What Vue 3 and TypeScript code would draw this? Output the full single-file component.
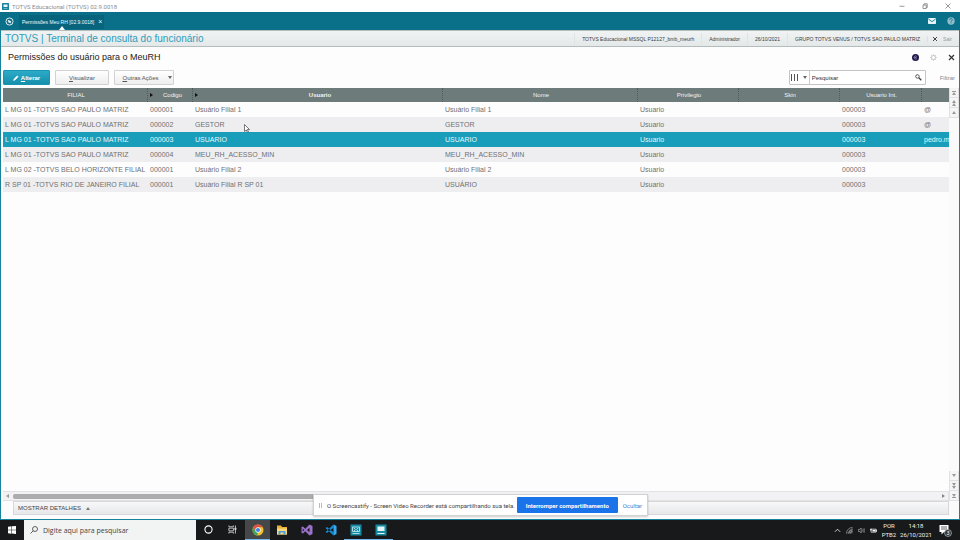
<script setup lang="ts">
import { ref } from 'vue'

interface Permission {
  branch: string
  code: string
  user: string
  name: string
  email: string
}

const columns = [
  { label: 'FILIAL', cls: 'c-branch', arrow: false },
  { label: 'Codigo', cls: 'c-code', arrow: true },
  { label: 'Usuario', cls: 'c-user', arrow: true },
  { label: 'Nome', cls: 'c-name', arrow: false },
  { label: 'Privilegio', cls: 'c-priv', arrow: false },
  { label: 'Skin', cls: 'c-skin', arrow: false },
  { label: 'Usuario Int.', cls: 'c-int', arrow: false },
  { label: '', cls: 'c-mail', arrow: false },
]

const rows: Permission[] = [
  { branch: 'L MG 01 -TOTVS SAO PAULO MATRIZ', code: '000001', user: 'Usuário Filial 1', name: 'Usuário Filial 1', email: '@' },
  { branch: 'L MG 01 -TOTVS SAO PAULO MATRIZ', code: '000002', user: 'GESTOR', name: 'GESTOR', email: '@' },
  { branch: 'L MG 01 -TOTVS SAO PAULO MATRIZ', code: '000003', user: 'USUARIO', name: 'USUARIO', email: 'pedro.m' },
  { branch: 'L MG 01 -TOTVS SAO PAULO MATRIZ', code: '000004', user: 'MEU_RH_ACESSO_MIN', name: 'MEU_RH_ACESSO_MIN', email: '' },
  { branch: 'L MG 02 -TOTVS BELO HORIZONTE FILIAL', code: '000001', user: 'Usuário Filial 2', name: 'Usuário Filial 2', email: '' },
  { branch: 'R SP 01 -TOTVS RIO DE JANEIRO FILIAL', code: '000001', user: 'Usuário Filial R SP 01', name: 'USUÁRIO', email: '' },
]

const selected = ref(2)
const query = ref('')
</script>

<template>
  <div class="desktop">
    <header class="titlebar">
      <svg class="app-icon" viewBox="0 0 14 14"><rect width="14" height="14" rx="1" fill="#16829b" /><rect x="3" y="3" width="8" height="5" fill="#e9f6f8" /><rect x="3" y="10" width="8" height="1.5" fill="#7fc3d0" /></svg>
      <span class="window-name">TOTVS Educacional (TOTVS) 02.9.0018</span>
      <button class="win-btn" aria-label="Minimizar"><svg viewBox="0 0 12 12"><path d="M1 6.500h10" /></svg></button>
      <button class="win-btn" aria-label="Restaurar"><svg viewBox="0 0 12 12"><path d="M2 4h6.500v7H2zM4 4V1.500h6.500V9h-2" /></svg></button>
      <button class="win-btn" aria-label="Fechar"><svg viewBox="0 0 12 12"><path d="M1 1l10 10M11 1L1 11" /></svg></button>
    </header>

    <nav class="tabs">
      <svg class="logo" viewBox="0 0 24 24"><circle cx="12" cy="12" r="9.500" fill="none" stroke="#e8f5f7" stroke-width="2.500" /><path d="M7 7l10 4-2 2 2 4-10-4 2-2z" fill="#e8f5f7" /></svg>
      <div class="tab">
        <span>Permissões Meu RH [02.9.0018]</span>
        <button class="tab-close" aria-label="Fechar aba">×</button>
      </div>
      <svg class="mail" viewBox="0 0 24 18"><rect width="24" height="18" rx="2" fill="#e6f4f7" /><path d="M1 3l11 8 11-8" fill="none" stroke="#0a6f88" stroke-width="2.500" /></svg>
      <svg class="help" viewBox="0 0 24 24"><circle cx="12" cy="12" r="11" fill="#8fbdc9" /><path d="M8 9c0-6 8-5 8-1 0 3-4 3-4 6M12 16v3" fill="none" stroke="#0a6f88" stroke-width="2.500" /></svg>
    </nav>

    <main class="window">
      <div class="banner">
        <h1>TOTVS | Terminal de consulta do funcionário</h1>
        <span class="info">TOTVS Educacional MSSQL P12127_bmb_meurh</span>
        <span class="info">Administrador</span>
        <span class="info">26/10/2021</span>
        <span class="info">GRUPO TOTVS VENUS / TOTVS SAO PAULO MATRIZ</span>
        <button class="exit"><svg viewBox="0 0 12 12"><path d="M2 2l8 8M10 2l-8 8" stroke="#444" stroke-width="2" /></svg>Sair</button>
      </div>

      <div class="heading">
        <h2>Permissões do usuário para o MeuRH</h2>
        <svg class="h-icon" viewBox="0 0 14 14"><circle cx="7" cy="7" r="7" fill="#20194a" /><path d="M9.500 5a3 3 0 1 0 0 4M5 7h4" fill="none" stroke="#b9b3d6" stroke-width="1.200" /></svg>
        <svg class="h-icon" viewBox="0 0 14 14"><circle cx="7" cy="7" r="4" fill="none" stroke="#b5b5b5" stroke-width="1.500" /><path d="M7 0v3M7 11v3M0 7h3M11 7h3M2 2l2 2M10 10l2 2M12 2l-2 2M4 10l-2 2" stroke="#c4c4c4" stroke-width="1.500" /></svg>
        <button class="close" aria-label="Fechar"><svg viewBox="0 0 14 14"><path d="M2 2l10 10M12 2L2 12" stroke="#333" stroke-width="2.400" /></svg></button>
      </div>

      <div class="toolbar">
        <button class="btn primary"><svg viewBox="0 0 12 12"><path d="M1 11l1-3 6-6 2 2-6 6zM9 1l2 2" fill="#fff" stroke="#fff" /></svg><span><u>A</u>lterar</span></button>
        <button class="btn"><span><u>V</u>isualizar</span></button>
        <button class="btn menu"><span><u>O</u>utras Ações</span><i class="tri down"></i></button>
        <div class="search">
          <button class="fields" aria-label="Colunas"><svg viewBox="0 0 24 21"><path d="M1.500 0v21M10.500 0v21M19.500 0v21" stroke="#555" stroke-width="3" /></svg><i class="tri down"></i></button>
          <input v-model="query" type="text" placeholder="Pesquisar" aria-label="Pesquisar" />
          <button class="find" aria-label="Buscar"><svg viewBox="0 0 20 20"><circle cx="7" cy="7" r="5" fill="none" stroke="#444" stroke-width="2.500" /><path d="M11 11l7 7" stroke="#444" stroke-width="4" /></svg></button>
        </div>
        <a class="filter" href="#">Filtrar</a>
      </div>

      <div class="grid-area">
        <div class="grid-main">
          <div class="table-wrap">
            <table>
              <thead>
                <tr>
                  <th v-for="c in columns" :key="c.cls" :class="c.cls">
                    <div class="th-in"><i v-if="c.arrow" class="sort"></i><span>{{ c.label }}</span></div>
                  </th>
                </tr>
              </thead>
              <tbody>
                <tr v-for="(r, i) in rows" :key="i" :class="{ selected: selected === i }" @click="selected = i">
                  <td>{{ r.branch }}</td>
                  <td>{{ r.code }}</td>
                  <td>{{ r.user }}</td>
                  <td>{{ r.name }}</td>
                  <td>Usuario</td>
                  <td></td>
                  <td>000003</td>
                  <td>{{ r.email }}</td>
                </tr>
              </tbody>
            </table>
          </div>
          <div class="hscroll"><i class="tri left"></i><div class="track"><div class="thumb"></div></div><i class="tri right"></i></div>
          <button class="details">MOSTRAR DETALHES <i class="tri up"></i></button>
        </div>
        <div class="vscroll">
          <button aria-label="Início"><i class="bar"></i><i class="tri up"></i></button>
          <button aria-label="Página acima"><i class="tri up"></i><i class="tri up"></i></button>
          <button aria-label="Acima"><i class="tri up"></i></button>
          <span class="fill"></span>
          <button aria-label="Abaixo"><i class="tri down"></i></button>
          <button aria-label="Página abaixo"><i class="tri down"></i><i class="tri down"></i></button>
          <button aria-label="Fim"><i class="tri down"></i><i class="bar"></i></button>
        </div>
      </div>
    </main>

    <footer class="taskbar">
      <button class="start" aria-label="Iniciar"><svg viewBox="0 0 16 16"><path d="M0 1.500l7-1v7H0zM8 .5l8-.5v7.500H8zM0 8.500h7v7l-7-1zM8 8.500h8V16l-8-.8z" fill="#fff" /></svg></button>
      <label class="task-search">
        <svg viewBox="0 0 16 16"><circle cx="10" cy="6" r="5" fill="none" stroke="#333" stroke-width="1.500" /><path d="M6.500 9.500L1 15" stroke="#333" stroke-width="1.500" /></svg>
        <input type="text" placeholder="Digite aqui para pesquisar" aria-label="Digite aqui para pesquisar" />
      </label>
      <div class="tasks">
        <button class="task" aria-label="Cortana"><svg viewBox="0 0 20 20"><circle cx="10" cy="10" r="8" fill="none" stroke="#fff" stroke-width="2.400" /></svg></button>
        <button class="task" aria-label="Visão de tarefas"><svg viewBox="0 0 20 20"><path d="M2 1v3h10V1M2 19v-3h10v3M2 7h10v6H2zM16.500 1v18M15 7h3v3h-3z" fill="none" stroke="#ddd" stroke-width="1.800" /></svg></button>
        <button class="task active open" aria-label="Chrome"><svg class="big" viewBox="0 0 24 24"><circle cx="12" cy="12" r="11" fill="#f2c12e" /><path d="M2.500 6.500L7.700 14.500 12 17l-1.500 5.900A11 11 0 0 1 2.500 6.500z" fill="#40a45b" /><path d="M2.500 6.500A11 11 0 0 1 21.500 6.500H12L7.700 14.500z" fill="#dd5144" /><circle cx="12" cy="12" r="5.300" fill="#fff" /><circle cx="12" cy="12" r="4.200" fill="#3f83ea" /></svg></button>
        <button class="task" aria-label="Explorador"><svg class="big" viewBox="0 0 24 24"><path d="M2 3h8l2 3h10v15H2z" fill="#e8b33a" /><path d="M2 9h20v12H2z" fill="#fbd978" /><path d="M5 21v-7h14v7h-4v-4H9v4z" fill="#4a9ddb" /></svg></button>
        <button class="task" aria-label="Visual Studio"><svg class="big" viewBox="0 0 24 24"><path fill-rule="evenodd" d="M1 6l3-1 4.500 4.500L17 1l6 3v16l-6 3-8.500-8.500L4 19l-3-1zM3.500 9v6l3-3zM17 7.500L12 12l5 4.500z" fill="#9a72c7" /></svg></button>
        <button class="task" aria-label="Visual Studio Code"><svg class="big" viewBox="0 0 24 24"><path d="M17 1v6.500L4 18l-3-2L17 1zM17 23v-6.500L4 6 1 8z" fill="#168ad2" /><path d="M17 1l6 3v16l-6 3z" fill="#38a9ef" /></svg></button>
        <button class="task open" aria-label="AppServer"><svg class="big" viewBox="0 0 24 24"><rect x="1" y="1" width="22" height="22" fill="#168aa2" /><path d="M5 6h14v9H5zM5 19h14M8 8l3 3-3 3M16 8l-3 3 3 3" fill="none" stroke="#b9e3eb" stroke-width="1.800" /></svg></button>
        <button class="task open" aria-label="SmartClient"><svg class="big" viewBox="0 0 24 24"><rect x="1" y="1" width="22" height="22" fill="#168aa2" /><path d="M5 5h14v9H5zM5 18h14v2H5z" fill="#e4f5f8" /></svg></button>
      </div>
      <div class="tray">
        <svg viewBox="0 0 16 16"><path d="M2 11l6-6 6 6" fill="none" stroke="#fff" stroke-width="1.800" /></svg>
        <svg viewBox="0 0 16 16"><path d="M1 15L15 1v14z" fill="#555" /><path d="M1 15a14 14 0 0 1 14-14M6 15a9 9 0 0 1 9-9M10 15a5 5 0 0 1 5-5" fill="none" stroke="#aaa" stroke-width="1.500" /></svg>
        <svg viewBox="0 0 20 16"><path d="M1 5h4l4-4v14l-4-4H1z" fill="none" stroke="#ddd" stroke-width="1.500" /><path d="M12 5q2 3 0 6M14.500 3q4 5 0 10M17 1q5 7 0 14" fill="none" stroke="#aaa" stroke-width="1.500" /></svg>
        <svg viewBox="0 0 20 16"><path d="M3 4h14v9H3zM17 6h2v5h-2z" fill="none" stroke="#fff" stroke-width="1.800" /><path d="M7 6h8v5H7z" fill="#fff" /><path d="M0 3h5v5H0z" fill="#ddd" /></svg>
      </div>
      <div class="stamp lang"><span>POR</span><span>PTB2</span></div>
      <div class="stamp clock"><span>14:18</span><span>26/10/2021</span></div>
      <button class="notice" aria-label="Notificações"><svg viewBox="0 0 26 26"><path d="M1 2h18v14h-9l-5 5v-5H1z" fill="#fff" /><path d="M4 6h12M4 10h12" stroke="#333" stroke-width="1.500" /><circle cx="18" cy="18" r="7" fill="#333" stroke="#ccc" stroke-width="1.200" /><text x="18" y="22" text-anchor="middle" font-size="11" fill="#fff">3</text></svg></button>
    </footer>

    <aside class="share">
      <i class="grip"></i>
      <span class="share-text">O Screencastify - Screen Video Recorder está compartilhando sua tela.</span>
      <button class="stop">Interromper compartilhamento</button>
      <a href="#">Ocultar</a>
    </aside>

    <svg class="pointer" viewBox="0 0 12 18"><path d="M1 1v14l3.500-3 2.500 5 2-1-2.300-5H11z" fill="#fff" stroke="#444" stroke-width="1.400" /></svg>
  </div>
</template>

<style>
body { margin: 0; overflow: hidden; }
</style>

<style scoped>
.desktop { position: relative; display: flex; flex-direction: column; height: 100vh; background: #fdfdfe; font-family: "Liberation Sans", Arial, sans-serif; font-size: 7px; color: #666; }
.desktop *, .desktop *::before { box-sizing: border-box; }
button { margin: 0; padding: 0; border: 0; background: none; font: inherit; color: inherit; }
input { min-width: 0; padding: 0; border: 0; outline: 0; background: none; font: inherit; }
a { text-decoration: none; }
svg { display: block; flex: none; }
h1, h2 { margin: 0; font-weight: 400; }

.tri { width: 0; height: 0; flex: none; border: 2px solid transparent; }
.tri.down { border-top: 3px solid #666; border-bottom: 0; }
.tri.up { border-bottom: 3px solid #777; border-top: 0; }
.tri.left { border-right: 3px solid #999; border-left: 0; }
.tri.right { border-left: 3px solid #888; border-right: 0; }

.titlebar { display: flex; align-items: center; flex: none; height: 12px; padding: 0 1px 0 2px; background: #fff; color: #8c8c8c; font-family: Roboto, sans-serif; font-size: 6px; }
.app-icon { width: 7px; height: 7px; margin-right: 3px; }
.window-name { flex: 1; }
.win-btn { display: flex; justify-content: center; width: 23px; }
.win-btn svg { width: 6px; height: 6px; fill: none; stroke: #777; stroke-width: 1.500; }

.tabs { display: flex; align-items: center; flex: none; height: 18px; padding: 0 5px; background: #0a6f88; color: #f0fafc; font-size: 5px; }
.logo { width: 9px; height: 9px; }
.tab { position: relative; display: flex; align-items: center; gap: 4px; height: 14px; margin: 2px auto 0 5px; padding: 0 2px 0 3px; background: #08647c; }
.tab::before { content: ""; position: absolute; left: 50%; bottom: -1px; margin-left: -3px; width: 0; height: 0; border: 3px solid transparent; border-bottom: 4px solid #fff; border-top: 0; }
.tab-close { font-size: 7px; line-height: 8px; }
.mail { width: 8px; height: 6px; margin-right: 11px; }
.help { width: 8px; height: 8px; }

.window { display: flex; flex-direction: column; flex: 1; min-height: 0; border: solid #16829b; border-width: 0 1px 1px; }
.banner { display: flex; align-items: center; flex: none; height: 17px; padding: 0 7px 0 4px; border: solid #b4bdbe; border-width: 1px 0; background: linear-gradient(#f1f3f3, #e4e8e9); }
.banner h1 { flex: 1; color: #2e9dbb; font-size: 10px; }
.info { padding: 0 7px; line-height: 12px; border-left: 1px solid #e0e3e4; font-size: 5px; color: #3c3c3c; }
.exit { display: flex; align-items: center; gap: 5px; padding-left: 4px; border-left: 1px solid #dde0e1; font-size: 5px; color: #999; }
.exit svg { width: 6px; height: 6px; }

.heading { display: flex; align-items: center; flex: none; height: 20px; padding: 0 4px 0 7px; color: #222; }
.heading h2 { flex: 1; font-size: 9px; }
.h-icon { width: 7px; height: 7px; margin-right: 11px; }
.close svg { width: 7px; height: 7px; }

.toolbar { display: flex; align-items: center; flex: none; height: 21px; padding: 0 4px 0 2px; }
.btn { display: flex; align-items: center; justify-content: center; gap: 2px; width: 54px; height: 15px; margin-right: 5px; border: 1px solid #d2d2d2; border-radius: 1px; background: linear-gradient(#fff, #eee); font-size: 6px; color: #555; }
.btn.primary { width: 47px; border-color: #1795b3; background: linear-gradient(#2babc8, #168fac); color: #fff; font-weight: 700; }
.btn.primary svg { width: 6px; height: 6px; }
.btn.menu { width: 60px; gap: 9px; padding-left: 6px; }
.search { display: flex; width: 137px; height: 15px; margin-left: auto; border: 1px solid #c4c4c4; border-radius: 1px; background: #fff; }
.fields { display: flex; align-items: center; justify-content: center; gap: 4px; width: 20px; border-right: 1px solid #ccc; }
.fields svg { width: 8px; height: 7px; }
.search input { flex: 1; padding-left: 2px; font-size: 6px; color: #333; }
.search input::placeholder { color: #333; opacity: 1; }
.find { padding: 0 3px; }
.find svg { width: 7px; height: 7px; }
.filter { margin-left: 14px; font-size: 6px; color: #888; }

.grid-area { display: flex; flex: 1; min-height: 0; padding: 0 0 4px 2px; }
.grid-main { display: flex; flex-direction: column; flex: 1; min-width: 0; }
.table-wrap { flex: 1; min-height: 0; overflow: hidden; }
table { width: 100%; table-layout: fixed; border-collapse: separate; border-spacing: 0; }
th { height: 14px; padding: 0; background: #6d7b7b; border-right: 1px dotted #4f5c5c; color: #f2f4f4; font-size: 6px; font-weight: 400; line-height: 14px; }
th:last-child { border-right: 0; }
th.c-user { font-weight: 700; }
.th-in { display: flex; align-items: center; padding-left: 2px; }
.th-in span { flex: 1; }
.sort { width: 0; height: 0; border: 2px solid transparent; border-left: 3px solid #111; border-right: 0; }
.c-branch { width: 145px; }
.c-code { width: 45px; }
.c-user { width: 250px; }
.c-name { width: 195px; }
.c-priv { width: 101px; }
.c-skin { width: 101px; }
.c-int { width: 82px; }
td { height: 15px; padding: 0 0 0 2px; overflow: hidden; white-space: nowrap; line-height: 15px; color: #707070; }
tbody tr:nth-child(even) td { background: #eeeef0; }
tbody tr.selected td { background: #189dbb; color: #e9f7fa; }

.hscroll { display: flex; align-items: center; flex: none; gap: 4px; height: 10px; padding: 0 3px; border: 1px solid #e2e2e4; border-left: 0; background: #f2f2f4; }
.track { flex: 1; }
.thumb { width: 62%; height: 5px; border-radius: 2px; background: #acacac; }
.details { display: flex; align-items: center; flex: none; gap: 5px; height: 14px; margin-left: 10px; padding-left: 4px; border: 1px solid #d8d8da; background: linear-gradient(#f8f8f9, #e7e8ea); font-size: 6px; color: #444; }

.vscroll { display: flex; flex-direction: column; flex: none; width: 10px; padding-bottom: 14px; background: #fafafa; }
.vscroll button { display: flex; flex-direction: column; align-items: center; justify-content: center; height: 10px; border: 1px solid #e1e1e3; border-top: 0; background: #f5f5f6; }
.vscroll .tri.up { border-bottom-color: #999; }
.vscroll .tri.down { border-top-color: #999; }
.vscroll .fill { flex: 1; }
.bar { width: 4px; height: 1px; background: #999; }

.taskbar { display: flex; align-items: stretch; flex: none; height: 20px; background: #17191a; font-family: Roboto, sans-serif; color: #eee; }
.start { display: flex; align-items: center; justify-content: center; width: 24px; }
.start svg { width: 8px; height: 8px; }
.tasks { display: flex; width: 197px; }
.task { display: flex; align-items: center; justify-content: center; flex: 1; border-bottom: 1px solid transparent; }
.task svg { width: 9px; height: 9px; }
.task svg.big { width: 12px; height: 12px; }
.task.open { border-bottom-color: #76b9ed; }
.task.active { background: #454749; }
.task-search { display: flex; align-items: center; gap: 5px; width: 172px; padding-left: 6px; background: #f2f3f3; }
.task-search svg { width: 8px; height: 8px; }
.task-search input { flex: 1; font-family: "Open Sans", sans-serif; font-size: 7px; color: #444; }
.task-search input::placeholder { color: #444; opacity: 1; }
.tray { display: flex; align-items: center; gap: 5px; margin-left: auto; }
.tray svg { width: 7px; height: 7px; }
.stamp { display: flex; flex-direction: column; justify-content: center; align-items: center; font-size: 6px; line-height: 9px; }
.lang { width: 24px; }
.clock { width: 30px; }
.notice { display: flex; align-items: center; justify-content: center; width: 29px; }
.notice svg { width: 13px; height: 13px; }

.share { position: absolute; left: 313px; bottom: 24px; display: flex; align-items: center; width: 335px; height: 22px; padding: 0 5px; border: 1px solid #d2d2d2; background: #fff; box-shadow: 0 1px 2px #0003; font-family: Roboto, sans-serif; font-size: 6px; color: #444; white-space: nowrap; }
.grip { width: 3px; height: 5px; margin-right: 5px; border: solid #bbb; border-width: 0 1px; }
.share-text { flex: 1; }
.stop { width: 101px; height: 16px; margin-right: 5px; border-radius: 1px; background: #1a73e8; color: #fff; font-weight: 700; }
.share a { color: #3c83d8; }
.pointer { position: absolute; left: 244px; top: 124px; width: 6px; height: 9px; }
</style>
